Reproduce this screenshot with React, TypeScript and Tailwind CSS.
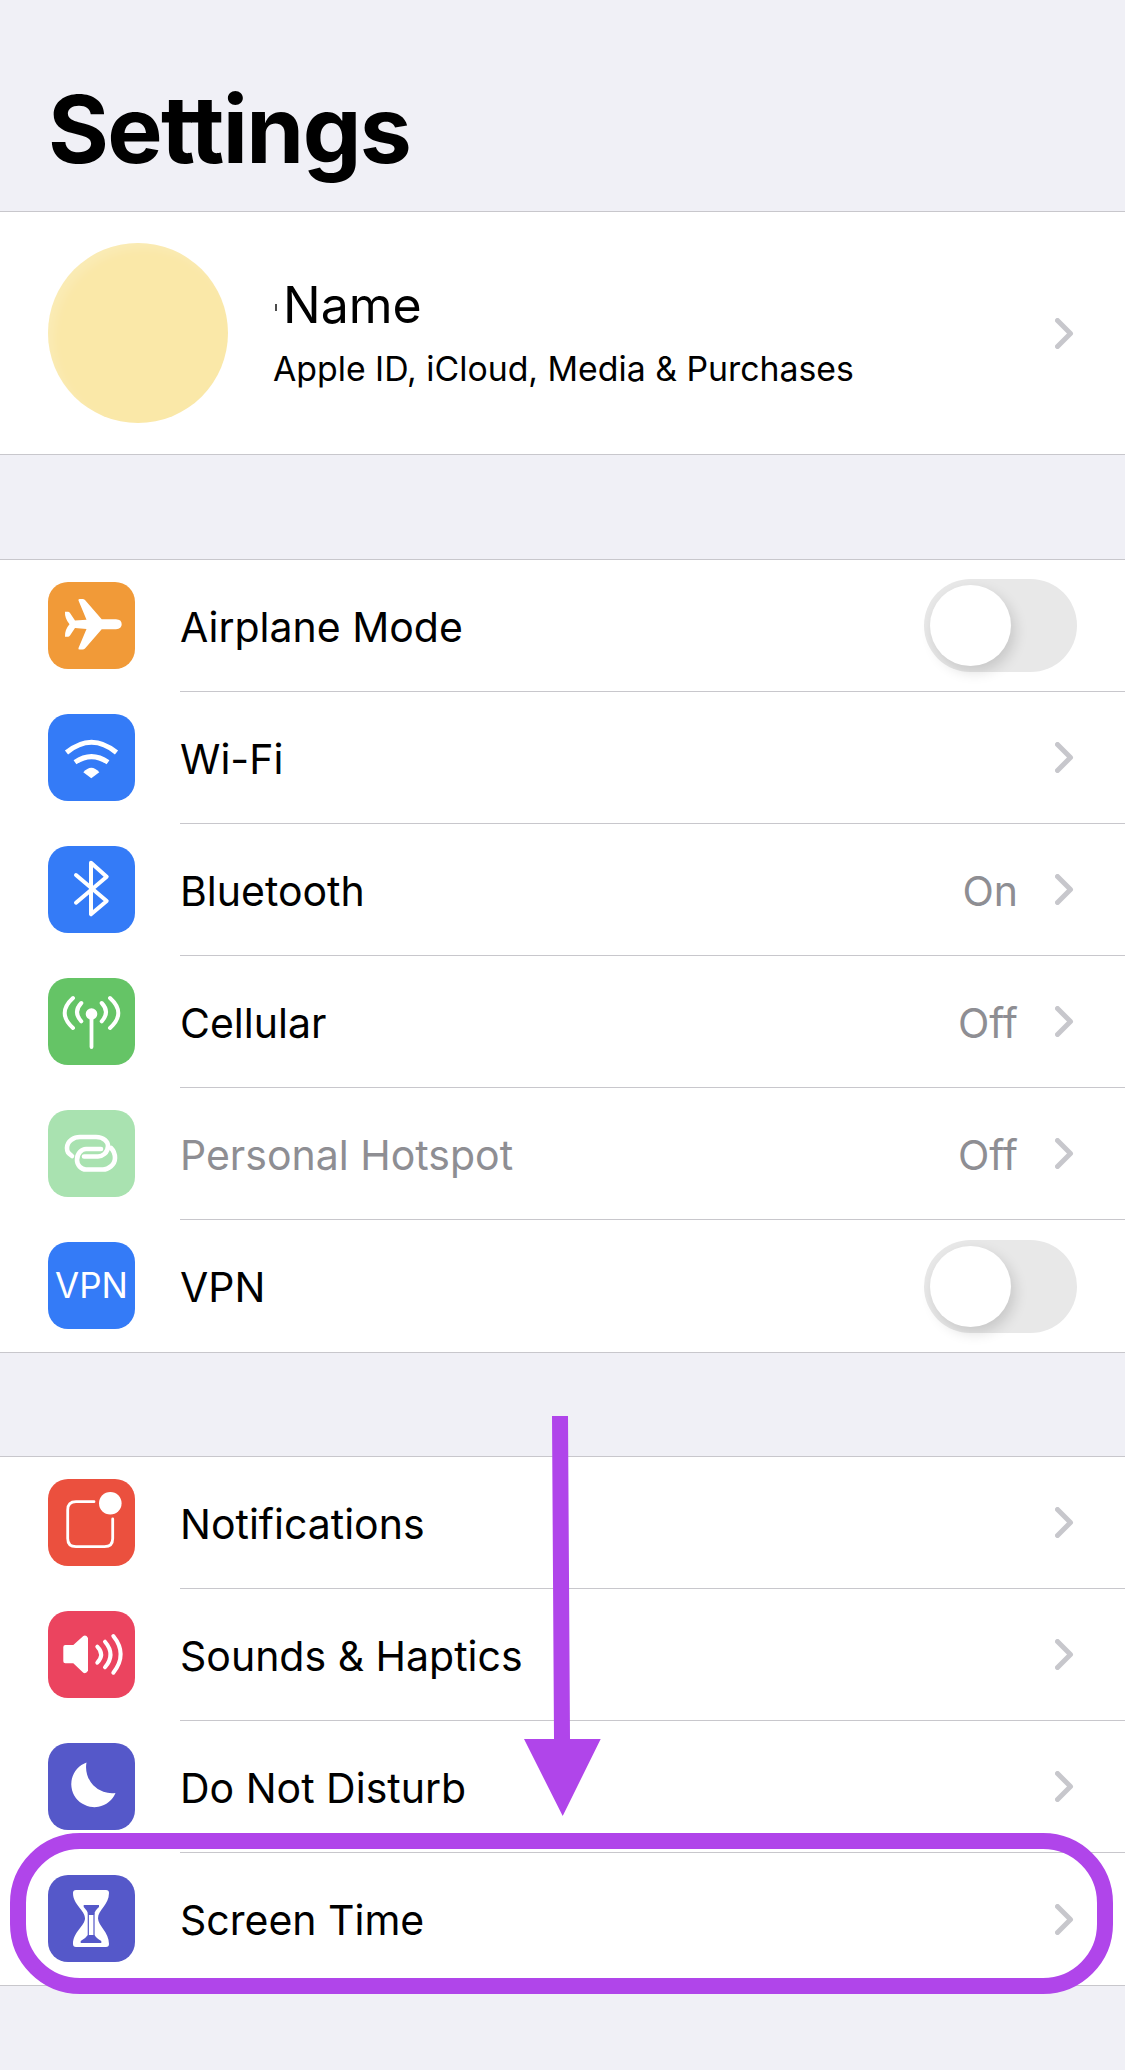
const sf = "font-['Inter',sans-serif]";

function Chevron() {
  return (
    <svg width="19" height="31" viewBox="0 0 19 31" className="shrink-0">
      <polyline points="2.5,2.5 15.5,15.5 2.5,28.5" fill="none" stroke="#c7c7cc" strokeWidth="5" strokeLinecap="round" strokeLinejoin="round" />
    </svg>
  );
}

function Toggle() {
  return (
    <div className="w-[153px] h-[93px] rounded-full bg-[#e8e8e8] p-[6px] mr-[48px]">
      <div className="size-[81px] rounded-full bg-white shadow-[4px_6px_14px_rgba(0,0,0,0.14)]" />
    </div>
  );
}

function Icon({ bg, children }: { bg: string; children: React.ReactNode }) {
  return (
    <div className={`size-[87px] shrink-0 mt-[22px] rounded-[20px] flex items-center justify-center ${bg}`}>
      {children}
    </div>
  );
}

function Glyph({ children }: { children: React.ReactNode }) {
  return (
    <svg width="87" height="87" viewBox="0 0 87 87" fill="white">
      {children}
    </svg>
  );
}

const airplane = (
  <Glyph>
    <path d="M17 29.7L20 29.7Q21 29.7 22 31L27 38.5L38.5 37.7L30.5 18.5Q30 17 31.5 17L34.5 17Q36 17 37 18L53.7 37.3L68 37.3Q73.7 37.5 73.7 42.3Q73.7 47 68 47.3L53.7 47.3L37 66.5Q36 67.5 34.5 67.5L31.5 67.5Q30 67.5 30.5 66L38.5 47L27 46L22 53.5Q21 54.8 20 54.8L17 54.8Q16.5 48 21.5 42.3Q16.5 36 17 29.7Z" />
  </Glyph>
);

const wifi = (
  <Glyph>
    <path d="M18.5 38.5Q43.5 18 68.5 38.5M27 48.3Q43.5 37 60 48.3" fill="none" stroke="white" strokeWidth="5" />
    <path d="M35.3 58.3Q43.3 49 51.3 58.3L43.3 64.3Z" />
  </Glyph>
);

const bluetooth = (
  <Glyph>
    <path d="M28 29L58.7 55L43 68.3L43 16.7L58.7 30.7L28 56.7" fill="none" stroke="white" strokeWidth="4" strokeLinecap="round" strokeLinejoin="round" />
  </Glyph>
);

const cellular = (
  <Glyph>
    <circle cx="43.5" cy="36" r="5.8" />
    <path d="M43.5 38V69" fill="none" stroke="white" strokeWidth="3.8" strokeLinecap="round" />
    <path d="M33.3 25Q24.7 34 33.3 43.3M53.7 25Q62.3 34 53.7 43.3M25 20Q8.4 35 25 50M62 20Q78.6 35 62 50" fill="none" stroke="white" strokeWidth="4" strokeLinecap="round" />
  </Glyph>
);

const hotspot = (
  <Glyph>
    <path d="M24 46C20 43 19 42 19 38C19 31 26 27 32 27L48 27C56 27 60 32 60 36C60 43 54 46.5 50 46.5L36 46.5" fill="none" stroke="white" strokeWidth="4.6" strokeLinecap="round" />
    <path d="M63 38C67 42 67 45 67 48C67 55 60 59.5 55 59.5L38 59.5C33 59.5 29 55 29 50C29 43 34 39 38 39L53 39" fill="none" stroke="white" strokeWidth="4.6" strokeLinecap="round" />
  </Glyph>
);

const bell = (
  <Glyph>
    <path d="M46 22.7L28 22.7Q19.7 22.7 19.7 31L19.7 59.5Q19.7 67.7 28 67.7L56.5 67.7Q64.7 67.7 64.7 59.5L64.7 40" fill="none" stroke="white" strokeWidth="2.8" strokeLinecap="round" />
    <circle cx="62.3" cy="24.3" r="11.3" />
  </Glyph>
);

const speaker = (
  <Glyph>
    <path d="M15.3 36Q15.3 34 17.3 34L25.3 34L35.3 25Q38 23.5 40 27L40 59.7Q38 63.2 35.3 61.7L25.3 52.3L17.3 52.3Q15.3 52.3 15.3 50.3Z" />
    <path d="M49.3 35.7Q57 43.7 49.3 51.7M57 30.7Q68 43.5 57 56.3M65.3 25Q80 43.3 65.3 61.7" fill="none" stroke="white" strokeWidth="4" strokeLinecap="round" />
  </Glyph>
);

const moon = (
  <Glyph>
    <path d="M38.5 19.5A23 23 0 1 0 67.5 50A26 26 0 0 1 38.5 19.5Z" />
  </Glyph>
);

const hourglass = (
  <Glyph>
    <path d="M28 15L58 15Q61 15 61 18C61 30 50 35 50 43.3C50 51 61 57 61 69Q61 72 58 72L28 72Q25 72 25 69C25 57 37 51 37 43.3C37 35 25 30 25 18Q25 15 28 15Z" />
    <path d="M35.7 30L51 30L51 32Q47 35 46 40L40.5 40Q39 35 35.7 32Z" fill="#5558c9" />
    <path d="M40.3 38V60M46 38V60" fill="none" stroke="#5558c9" strokeWidth="1.2" />
    <path d="M39.8 60L46.6 60Q48 63 53.3 66V68L32.7 68V66Q38 63 39.8 60Z" fill="#5558c9" />
  </Glyph>
);

type RowProps = {
  icon: React.ReactNode;
  bg: string;
  label: string;
  value?: string;
  toggle?: boolean;
  dim?: boolean;
  last?: boolean;
};

function Row({ icon, bg, label, value, toggle, dim, last }: RowProps) {
  return (
    <div className="flex items-start h-[132px] pl-[48px]">
      <Icon bg={bg}>{icon}</Icon>
      <div className={`flex-1 h-full ml-[45px] flex items-center ${last ? "" : "border-b border-[#c8c7cc]"}`}>
        <span className={`flex-1 pt-[3px] text-[41px] leading-none ${dim ? "text-[#8e8e93]" : "text-black"}`}>{label}</span>
        {toggle ? (
          <Toggle />
        ) : (
          <>
            {value && <span className="pt-[3px] text-[41px] leading-none text-[#8e8e93] mr-[37px]">{value}</span>}
            <div className="mr-[51px]"><Chevron /></div>
          </>
        )}
      </div>
    </div>
  );
}

export default function App() {
  return (
    <div className={`relative h-[2070px] overflow-hidden bg-[#f0f0f6] ${sf}`}>
      <div className="h-[211px] pl-[48px] pt-[83px]">
        <h1 className="text-[93px] font-bold leading-none tracking-[-1.6px] text-black">Settings</h1>
      </div>

      <div className="h-[244px] bg-white border-y border-[#c8c7cc] flex items-center pl-[48px] pr-[51px]">
        <div className="size-[180px] shrink-0 rounded-full bg-[#fae8a8] shadow-[inset_6px_6px_8px_rgba(255,255,255,0.15)]" />
        <div className="flex-1 ml-[45px]">
          <div className="flex items-center pl-[2px] mb-[22px]">
            <span className="w-[2px] h-[7px] bg-black/70 mt-[4px] mr-[6px]" />
            <span className="text-[50px] leading-none text-black">Name</span>
          </div>
          <div className="text-[33.8px] leading-none text-black">Apple ID, iCloud, Media &amp; Purchases</div>
        </div>
        <Chevron />
      </div>

      <div className="mt-[104px] bg-white border-y border-[#c8c7cc]">
        <Row icon={airplane} bg="bg-[#f19a38]" label="Airplane Mode" toggle />
        <Row icon={wifi} bg="bg-[#347bf7]" label="Wi-Fi" />
        <Row icon={bluetooth} bg="bg-[#347bf7]" label="Bluetooth" value="On" />
        <Row icon={cellular} bg="bg-[#65c466]" label="Cellular" value="Off" />
        <Row icon={hotspot} bg="bg-[#a9e2b0]" label="Personal Hotspot" value="Off" dim />
        <Row
          icon={<span className="text-[35px] leading-none text-white">VPN</span>}
          bg="bg-[#347bf7]"
          label="VPN"
          toggle
          last
        />
      </div>

      <div className="mt-[103px] bg-white border-y border-[#c8c7cc]">
        <Row icon={bell} bg="bg-[#eb503e]" label="Notifications" />
        <Row icon={speaker} bg="bg-[#eb445f]" label="Sounds &amp; Haptics" />
        <Row icon={moon} bg="bg-[#5558c9]" label="Do Not Disturb" />
        <Row icon={hourglass} bg="bg-[#5558c9]" label="Screen Time" last />
      </div>

      {/* annotation drawn over the list */}
      <svg className="absolute left-[520px] top-[1414px]" width="84" height="404" viewBox="520 1414 84 404">
        <polygon points="552,1416 568,1416 570,1739 600.7,1739 562.7,1816 524,1739 554,1739" fill="#b045ea" />
      </svg>
      <div className="absolute left-[10px] top-[1833px] w-[1103px] h-[161px] rounded-[70px] border-[16px] border-[#b045ea]" />
    </div>
  );
}
